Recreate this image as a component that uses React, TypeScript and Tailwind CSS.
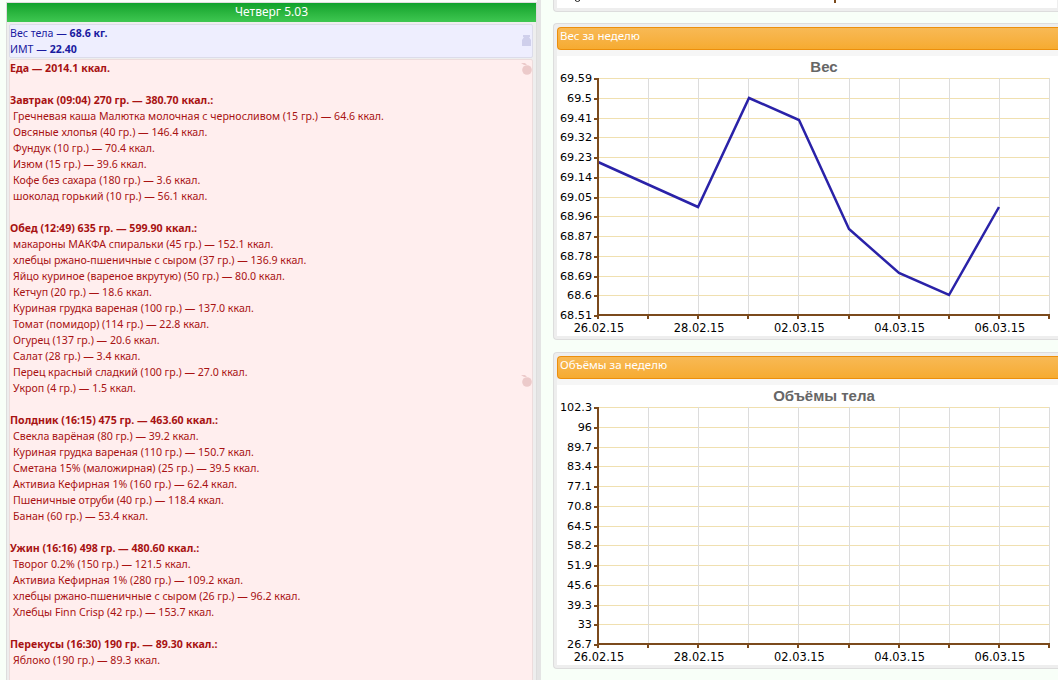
import React from "react";

const meals = [
  { title: "Завтрак (09:04) 270 гр. — 380.70 ккал.:", items: ["Гречневая каша Малютка молочная с черносливом (15 гр.) — 64.6 ккал.", "Овсяные хлопья (40 гр.) — 146.4 ккал.", "Фундук (10 гр.) — 70.4 ккал.", "Изюм (15 гр.) — 39.6 ккал.", "Кофе без сахара (180 гр.) — 3.6 ккал.", "шоколад горький (10 гр.) — 56.1 ккал."] },
  { title: "Обед (12:49) 635 гр. — 599.90 ккал.:", items: ["макароны МАКФА спиральки (45 гр.) — 152.1 ккал.", "хлебцы ржано-пшеничные с сыром (37 гр.) — 136.9 ккал.", "Яйцо куриное (вареное вкрутую) (50 гр.) — 80.0 ккал.", "Кетчуп (20 гр.) — 18.6 ккал.", "Куриная грудка вареная (100 гр.) — 137.0 ккал.", "Томат (помидор) (114 гр.) — 22.8 ккал.", "Огурец (137 гр.) — 20.6 ккал.", "Салат (28 гр.) — 3.4 ккал.", "Перец красный сладкий (100 гр.) — 27.0 ккал.", "Укроп (4 гр.) — 1.5 ккал."] },
  { title: "Полдник (16:15) 475 гр. — 463.60 ккал.:", items: ["Свекла варёная (80 гр.) — 39.2 ккал.", "Куриная грудка вареная (110 гр.) — 150.7 ккал.", "Сметана 15% (маложирная) (25 гр.) — 39.5 ккал.", "Активиа Кефирная 1% (160 гр.) — 62.4 ккал.", "Пшеничные отруби (40 гр.) — 118.4 ккал.", "Банан (60 гр.) — 53.4 ккал."] },
  { title: "Ужин (16:16) 498 гр. — 480.60 ккал.:", items: ["Творог 0.2% (150 гр.) — 121.5 ккал.", "Активиа Кефирная 1% (280 гр.) — 109.2 ккал.", "хлебцы ржано-пшеничные с сыром (26 гр.) — 96.2 ккал.", "Хлебцы Finn Crisp (42 гр.) — 153.7 ккал."] },
  { title: "Перекусы (16:30) 190 гр. — 89.30 ккал.:", items: ["Яблоко (190 гр.) — 89.3 ккал."] },
];

const dates = ["26.02.15", "28.02.15", "02.03.15", "04.03.15", "06.03.15"];
const FONT = "'DejaVu Sans', Verdana, sans-serif";

function Chart({ title, labels, top, step, height, points }: { title: string; labels: string[]; top: number; step: number; height: number; points?: string }) {
  const left = 41;
  const cols = Array.from({ length: 10 }, (_, i) => left + i * 50.1);
  const bottom = top + step * (labels.length - 1);
  return (
    <svg width="500" height={height} className="block" shapeRendering="crispEdges">
      <text x="267" y={top - 6} textAnchor="middle" fill="#666666" fontSize="15" fontWeight="700" fontFamily="'Liberation Sans', Arial, sans-serif" shapeRendering="auto">{title}</text>
      {labels.map((_, i) => <line key={i} x1={left} x2="492.5" y1={Math.round(top + i * step) + 0.5} y2={Math.round(top + i * step) + 0.5} stroke="#f0e0b0" />)}
      {cols.map((x, i) => <line key={i} x1={Math.round(x) + 0.5} x2={Math.round(x) + 0.5} y1={top} y2={bottom} stroke="#dcdcdc" />)}
      {points && <polyline points={points} fill="none" stroke="#2a22a8" strokeWidth="2.5" shapeRendering="auto" />}
      <line x1={left} x2={left} y1={top} y2={bottom + 1} stroke="#7b4a1c" strokeWidth="2" />
      <line x1={left - 1} x2="493" y1={bottom} y2={bottom} stroke="#7b4a1c" strokeWidth="2" />
      {labels.map((l, i) => {
        const y = Math.round(top + i * step);
        return (
          <g key={l}>
            <line x1={left - 4} x2={left} y1={y + 0.5} y2={y + 0.5} stroke="#7b4a1c" strokeWidth="2" />
            <text x={left - 6} y={y + 4} textAnchor="end" fontSize="11.2" fill="#000" fontFamily={FONT} shapeRendering="auto">{l}</text>
          </g>
        );
      })}
      {cols.map((x, i) => <line key={i} x1={Math.round(x)} x2={Math.round(x)} y1={bottom} y2={bottom + 4} stroke="#7b4a1c" strokeWidth="2" />)}
      {dates.map((d, i) => <text key={d} x={left + 1 + i * 100.2} y={bottom + 17} textAnchor="middle" fontSize="11.4" fill="#000" fontFamily={FONT} shapeRendering="auto">{d}</text>)}
    </svg>
  );
}

function Apple({ className }: { className: string }) {
  return (
    <svg width="11" height="12" viewBox="0 0 11 12" className={className}>
      <path d="M0 0 L4 0 L6 2 L3 2 Z" fill="#eccaca" />
      <circle cx="6" cy="7" r="4.8" fill="#eccaca" />
    </svg>
  );
}

function Card({ title, children }: { title: string; children: React.ReactNode }) {
  return (
    <section className="border border-[#dddddd] rounded-l-[4px] border-r-0 bg-[#eeeeee] pl-[3px] pt-[3px] pb-[3px]">
      <div className="h-[23px] rounded-l-[4px] border border-r-0 border-[#ec8f0c] bg-gradient-to-b from-[#f8b954] to-[#f6ab30] pl-[2px] text-[11.5px] leading-[16px] text-white" style={{ fontFamily: "'Noto Sans', sans-serif" }}>{title}</div>
      <div className="h-[6px] bg-[#f6f6f6]" />
      {children}
    </section>
  );
}

export default function App() {
  return (
    <div className="flex w-[1058px] h-[680px] overflow-hidden bg-[#f8fff8]" style={{ fontFamily: "'Noto Sans', sans-serif" }}>
      <div className="ml-[6px] mt-[2px] w-[531px] h-[700px] shrink-0 border border-[#dddddd] bg-[#eeeeee]">
        <div className="h-[19px] bg-gradient-to-b from-[#0ca22a] to-[#3ec751] text-center text-[12px] leading-[18px] text-white">Четверг 5.03</div>
        <div className="ml-[2px] mr-[3px] mt-[2px] flex flex-col">
          <div className="relative h-[34px] border border-[#dcdcea] rounded-[2px] bg-[#eeeefe] text-[10.6px] leading-[16px] text-[#1a1aa0]">
            <div>Вес тела — <b>68.6 кг.</b></div>
            <div>ИМТ — <b>22.40</b></div>
            <svg width="9" height="12" viewBox="0 0 9 12" className="absolute right-[1px] top-[10px]"><path d="M1 0h7v2H7l2 3v6H0V5l2-3H1z" fill="#cfcfeb" /></svg>
          </div>
          <div className="relative mt-[1px] h-[640px] border border-[#ecdcdc] rounded-[2px] bg-[#ffeeee] text-[10.6px] leading-[16px] text-[#a81212]">
            <Apple className="absolute right-[0px] top-[3px]" />
            <Apple className="absolute right-[0px] top-[315px]" />
            <div className="font-bold">Еда — 2014.1 ккал.</div>
            <div className="h-[16px]" />
            {meals.map((m) => (
              <div key={m.title} className="mb-[16px]">
                <div className="font-bold">{m.title}</div>
                {m.items.map((it) => <div key={it} className="pl-[3px]">{it}</div>)}
              </div>
            ))}
          </div>
        </div>
      </div>
      <div className="w-[4px] h-full shrink-0 bg-[#e4e4e4]" />
      <div className="ml-[12px] flex-1 min-w-[510px] flex flex-col">
        <div className="h-[12px] border border-t-0 border-r-0 border-[#dddddd] rounded-bl-[4px] bg-[#eeeeee] pl-[3px] pb-[3px]">
          <svg width="500" height="8" className="block bg-white" shapeRendering="crispEdges">
            <circle cx="20.5" cy="-1" r="2.5" fill="none" stroke="#222" shapeRendering="auto" />
            <rect x="277" y="0" width="2" height="3" fill="#7b4a1c" />
          </svg>
        </div>
        <div className="mt-[11px]">
          <Card title="Вес за неделю">
            <div className="bg-white h-[280px]">
              <Chart title="Вес" top={22} step={19.75} height={280} points="41,106 141,151 192,42 242,64 292,173 342,217 392,239 442,151" labels={["69.59", "69.5", "69.41", "69.32", "69.23", "69.14", "69.05", "68.96", "68.87", "68.78", "68.69", "68.6", "68.51"]} />
            </div>
          </Card>
        </div>
        <div className="mt-[12px]">
          <Card title="Объёмы за неделю">
            <div className="bg-white h-[280px]">
              <Chart title="Объёмы тела" top={22} step={19.75} height={280} labels={["102.3", "96", "89.7", "83.4", "77.1", "70.8", "64.5", "58.2", "51.9", "45.6", "39.3", "33", "26.7"]} />
            </div>
          </Card>
        </div>
      </div>
    </div>
  );
}
